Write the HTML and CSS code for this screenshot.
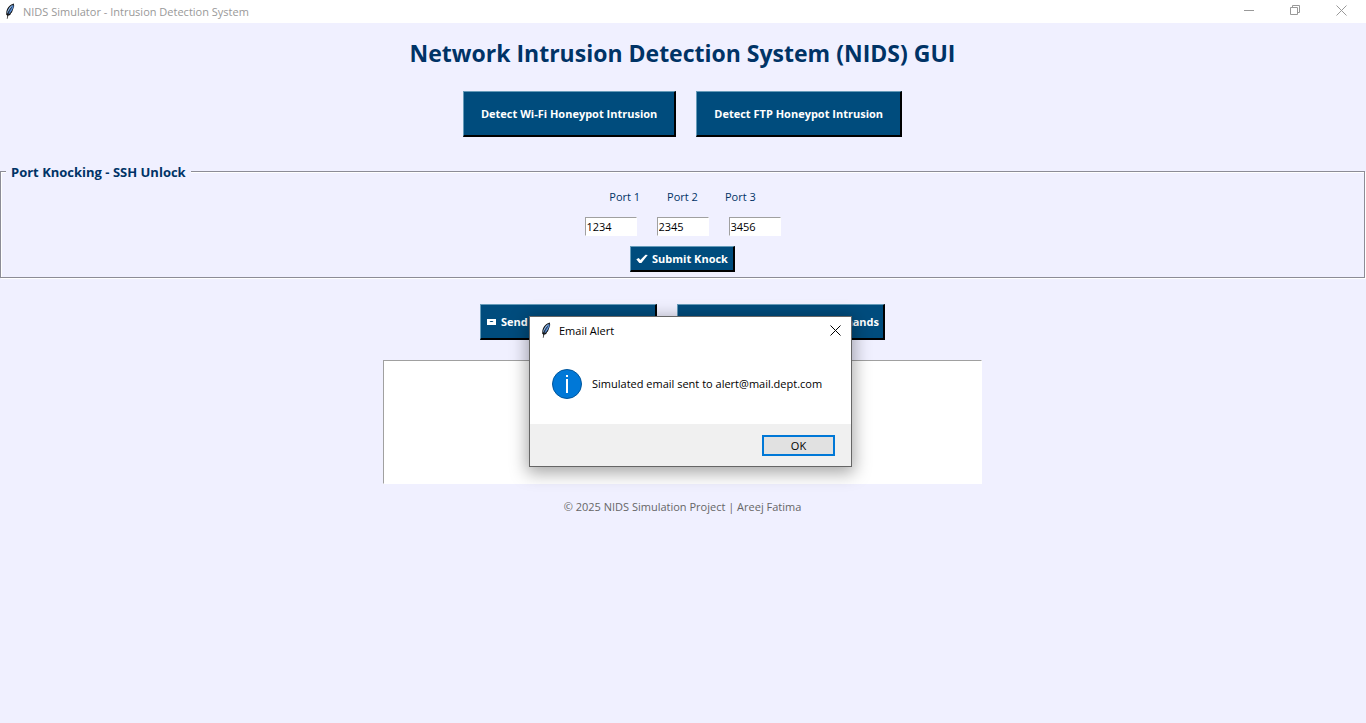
FILE: index.html
```html
<!DOCTYPE html>
<html lang="en">
<head>
<meta charset="utf-8">
<title>NIDS Simulator - Intrusion Detection System</title>
<link rel="stylesheet" href="styles.css">
</head>
<body>
<svg class="defs" aria-hidden="true">
  <symbol id="feather" viewBox="0 0 10 17">
    <path d="M8.800 .6C5.500 1.300 2.300 4.600 1.400 8.500l-.2 3.300 1.100.6-.3 3.600.9-3.300 2.300-.8.900-2 .8-.5 1.300-3.400L9.200 3z" fill="#111"/>
    <path d="M8.300 1.400C5.800 2.200 3.300 5.200 2.300 8.400L2.100 11l1.800-3.600z" fill="#8ebcf0"/>
    <path d="M8.300 1.800L4.200 7.800 2.900 11.600l1.800-1 2-2.800L8.500 4z" fill="#5b93e0"/>
    <path d="M6.800 4.300C4.800 7 3 10 2.200 15.800" fill="none" stroke="#111" stroke-width=".6"/>
  </symbol>
</svg>
<header class="titlebar">
  <svg class="feather"><use href="#feather"/></svg>
  <span class="titlebar-text">NIDS Simulator - Intrusion Detection System</span>
  <div class="window-controls">
    <button type="button" aria-label="Minimize"><svg viewBox="0 0 11 11"><path d="M0 5.500h10"/></svg></button>
    <button type="button" aria-label="Restore"><svg viewBox="0 0 11 11"><path d="M.5 2.500h7v7h-7zM2.500 2.500v-2h7v7h-2"/></svg></button>
    <button type="button" aria-label="Close"><svg viewBox="0 0 11 11"><path d="M.5.5l10 10M10.500.5l-10 10"/></svg></button>
  </div>
</header>
<main class="content">
  <h1>Network Intrusion Detection System (NIDS) GUI</h1>
  <div class="button-row">
    <button type="button" class="btn btn-large">Detect Wi-Fi Honeypot Intrusion</button>
    <button type="button" class="btn btn-large">Detect FTP Honeypot Intrusion</button>
  </div>
  <fieldset class="knock">
    <legend>Port Knocking - SSH Unlock</legend>
    <div class="port-labels">
      <label for="port1">Port 1</label>
      <label for="port2">Port 2</label>
      <label for="port3">Port 3</label>
    </div>
    <div class="port-inputs">
      <input id="port1" type="text" value="1234">
      <input id="port2" type="text" value="2345">
      <input id="port3" type="text" value="3456">
    </div>
    <button type="button" class="btn btn-submit">
      <svg class="check" viewBox="0 0 12 10"><path d="M.3 5.300l2.500-1.300 1.500 2L9.500 .8l2.300.2L5.400 9H3.300z" fill="#fff"/></svg>
      Submit Knock
    </button>
  </fieldset>
  <div class="button-row">
    <button type="button" class="btn btn-email">
      <svg class="mail" viewBox="0 0 9 6"><path d="M0 0h9v6H0z" fill="#fff"/><path d="M2.500 2h4L5.500 3h-2z" fill="#004c7d"/></svg>
      Send
    </button>
    <button type="button" class="btn btn-commands">Commands</button>
  </div>
  <textarea class="output" aria-label="Output"></textarea>
  <footer>© 2025 NIDS Simulation Project | Areej Fatima</footer>
</main>
<div class="dialog" role="dialog" aria-labelledby="dialog-title">
  <div class="dialog-title">
    <svg class="feather"><use href="#feather"/></svg>
    <span id="dialog-title">Email Alert</span>
    <button type="button" aria-label="Close"><svg viewBox="0 0 11 11"><path d="M.5.5l10 10M10.500.5l-10 10"/></svg></button>
  </div>
  <div class="dialog-body">
    <svg class="info" viewBox="0 0 30 30"><circle cx="15" cy="15" r="14.500" fill="#0078d7" stroke="#00569c"/><path d="M14 6h2v2h-2zM14 10h2v14h-2z" fill="#fff"/></svg>
    <p>Simulated email sent to alert@mail.dept.com</p>
  </div>
  <div class="dialog-actions">
    <button type="button" class="ok">OK</button>
  </div>
</div>
</body>
</html>
```

FILE: styles.css
```css
* { box-sizing: border-box; }

body {
  margin: 0;
  min-height: 100vh;
  background: #f0f0ff;
  color: #003366;
  font: 11px/16px "Open Sans", "Noto Sans", sans-serif;
}

button, input, textarea { font: inherit; }

.defs { position: absolute; width: 0; height: 0; }

.feather { width: 10px; height: 17px; flex: none; }

.titlebar {
  display: flex;
  align-items: center;
  height: 23px;
  padding: 0 2px 0 5px;
  background: #fff;
  color: #999;
}
.titlebar-text { margin-left: 8px; }
.window-controls { display: flex; align-self: flex-start; margin-left: auto; }
.window-controls button {
  display: flex;
  align-items: center;
  justify-content: center;
  width: 46px;
  height: 21px;
  padding: 0;
  border: 0;
  background: none;
}
.window-controls svg,
.dialog-title button svg {
  width: 11px;
  height: 11px;
  fill: none;
  stroke: #999;
}

.content {
  display: flex;
  flex-direction: column;
  align-items: center;
  padding-right: 1px;
}

h1 {
  margin: 14px 0 22px;
  font-size: 23px;
  line-height: 32px;
  font-weight: 700;
}

.button-row { display: flex; gap: 20px; }

.btn {
  display: flex;
  align-items: center;
  justify-content: center;
  gap: 4px;
  border: 2px solid;
  border-width: 1px 2px 2px 1px;
  border-color: #669bb9 #000 #000 #669bb9;
  background: #004c7d;
  color: #fff;
  font-weight: 700;
  white-space: nowrap;
}
.btn-large { height: 46px; padding: 1px 17px 0; }
.btn-submit { height: 26px; margin: 10px auto 0; padding: 0 5px; }
.btn-email { width: 177px; height: 36px; padding: 0 6px; justify-content: flex-start; }
.btn-commands { width: 208px; height: 36px; padding: 0 4px; justify-content: flex-end; }

.knock {
  align-self: stretch;
  margin: 26px 0;
  padding: 9px 0 5px;
  border: 1px solid #8c8c96;
  box-shadow: 1px 1px 0 #fff, inset 1px 1px 0 #fff;
}
.knock legend {
  margin-left: 5px;
  padding: 1px 5px 0;
  background: #f0f0ff;
  font-size: 13px;
  font-weight: 700;
}
.port-labels, .port-inputs { display: flex; justify-content: center; }
.port-labels { gap: 27px; }
.port-inputs { gap: 20px; margin-top: 12px; }
.port-inputs input {
  width: 52px;
  height: 19px;
  padding: 0 1px;
  border: 1px solid #fff;
  border-color: #a0a0a0 #fff #fff #a0a0a0;
  background: #fff;
  color: #000;
}
.check { width: 12px; height: 10px; }
.mail { width: 9px; height: 6px; margin-right: 1px; }

.output {
  width: 43.8%;
  height: 124px;
  min-width: 599px;
  margin: 20px 0 15px;
  border: 1px solid #fff;
  border-color: #a0a0a0 #fff #fff #a0a0a0;
  background: #fff;
  resize: none;
}

footer { color: #666; }

.dialog {
  position: absolute;
  left: 529px;
  top: 316px;
  width: 323px;
  border: 1px solid #666;
  background: #fff;
  color: #000;
  box-shadow: 0 4px 16px 2px rgba(0, 0, 0, .35);
}
.dialog-title { display: flex; align-items: center; height: 27px; padding-left: 11px; }
.dialog-title span { margin-left: 8px; }
.dialog-title button {
  display: flex;
  margin-left: auto;
  padding: 0 10px;
  border: 0;
  background: none;
}
.dialog-title button svg { stroke: #000; }
.dialog-body { display: flex; align-items: center; gap: 10px; height: 80px; padding-left: 22px; }
.info { width: 30px; height: 30px; flex: none; }
.dialog-body p { margin: 0; white-space: nowrap; }
.dialog-actions {
  display: flex;
  justify-content: flex-end;
  padding: 11px 16px 10px;
  background: #f0f0f0;
}
.ok {
  width: 73px;
  height: 21px;
  padding: 0;
  border: 2px solid #0078d7;
  background: #e1e1e1;
  color: #000;
  line-height: 17px;
}
```
